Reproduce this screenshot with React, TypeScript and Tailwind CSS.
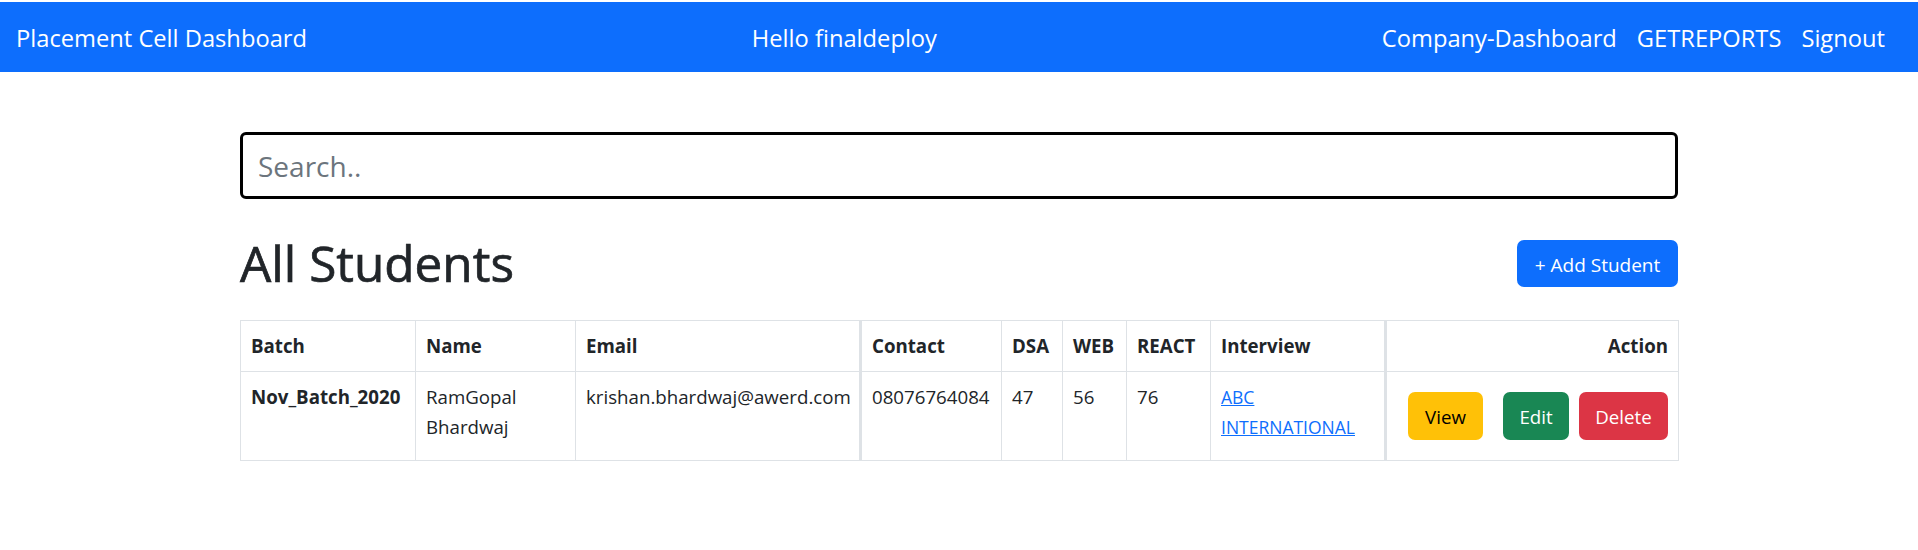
import React from "react";

export default function App() {
  const cell = "border border-[#dee2e6] px-[10px] py-[10px] align-top text-left";
  return (
    <div className="min-h-[550px] bg-white font-['Open_Sans',sans-serif] text-[#212529]">
      <div className="h-[2px] bg-white" />
      <nav className="flex h-[70px] items-center bg-[#0d6efd] pl-[16px] pr-[33px] pt-[4px] text-[23.7px] text-white">
        <a className="whitespace-nowrap">Placement Cell Dashboard</a>
        <span className="mx-auto whitespace-nowrap">Hello finaldeploy</span>
        <div className="flex items-center gap-[20px] whitespace-nowrap">
          <a>Company-Dashboard</a>
          <a>GETREPORTS</a>
          <a>Signout</a>
        </div>
      </nav>

      <main className="mx-auto w-[1438px] pt-[60px]">
        <input
          placeholder="Search.."
          className="block h-[67px] w-full rounded-[6px] border-[3px] border-black px-[15px] text-[28px] text-[#212529] outline-none placeholder:text-[#6c757d]"
        />

        <div className="mt-[34px] flex items-center justify-between">
          <h1 className="text-[49.5px] font-medium leading-[61px] [-webkit-text-stroke:0.7px_#212529]">All Students</h1>
          <button className="h-[47px] w-[161px] rounded-[7px] bg-[#0d6efd] pt-[3px] text-[19px] text-white">
            + Add Student
          </button>
        </div>

        <table className="mt-[26px] w-full table-fixed border-collapse text-[18.7px] leading-[30px]">
          <colgroup>
            <col className="w-[175px]" />
            <col className="w-[160px]" />
            <col className="w-[285px]" />
            <col className="w-[141px]" />
            <col className="w-[61px]" />
            <col className="w-[64px]" />
            <col className="w-[84px]" />
            <col className="w-[175px]" />
            <col className="w-[293px]" />
          </colgroup>
          <thead>
            <tr className="font-bold">
              <th className={cell}>Batch</th>
              <th className={cell}>Name</th>
              <th className={cell}>Email</th>
              <th className={`${cell} border-l-[3px]`}>Contact</th>
              <th className={cell}>DSA</th>
              <th className={cell}>WEB</th>
              <th className={cell}>REACT</th>
              <th className={cell}>Interview</th>
              <th className={`${cell} border-l-[3px] !text-right`}>Action</th>
            </tr>
          </thead>
          <tbody>
            <tr>
              <td className={`${cell} font-bold`}>Nov_Batch_2020</td>
              <td className={cell}>RamGopal Bhardwaj</td>
              <td className={`${cell} whitespace-nowrap`}>krishan.bhardwaj@awerd.com</td>
              <td className={`${cell} border-l-[3px]`}>08076764084</td>
              <td className={cell}>47</td>
              <td className={cell}>56</td>
              <td className={cell}>76</td>
              <td className={cell}>
                <a className="text-[17.5px] text-[#0d6efd] underline">ABC INTERNATIONAL</a>
              </td>
              <td className={`${cell} border-l-[3px]`}>
                <div className="flex justify-end py-[10px]">
                  <button className="mr-[20px] h-[48px] w-[75px] rounded-[7px] bg-[#ffc107] pt-[2px] text-black">View</button>
                  <button className="mr-[10px] h-[48px] w-[66px] rounded-[7px] bg-[#198754] pt-[2px] text-white">Edit</button>
                  <button className="h-[48px] w-[89px] rounded-[7px] bg-[#dc3545] pt-[2px] text-white">Delete</button>
                </div>
              </td>
            </tr>
          </tbody>
        </table>
      </main>
    </div>
  );
}
